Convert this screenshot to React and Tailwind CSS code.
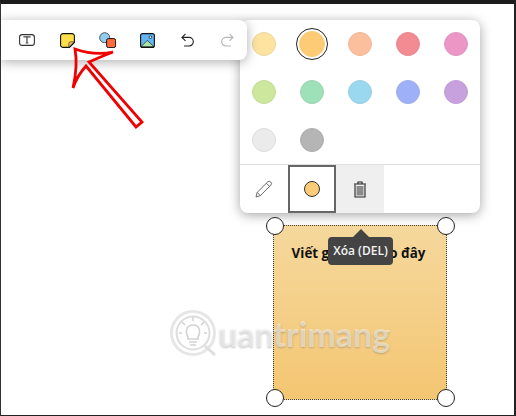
const swatches = [
  'bg-[#fee3a0] border-[#ecd59b]',
  'bg-[#fdcb75] border-[#fdcb75]',
  'bg-[#fbbf9d] border-[#efb899]',
  'bg-[#f38b92] border-[#e78a91]',
  'bg-[#ec96c6] border-[#e096bf]',
  'bg-[#cde79c] border-[#c3da99]',
  'bg-[#9ee0b8] border-[#9dd3b3]',
  'bg-[#99d8ef] border-[#9bcde0]',
  'bg-[#9db0f8] border-[#9eaeea]',
  'bg-[#c7a1de] border-[#bd9fd1]',
  'bg-[#ebebeb] border-[#dcdcdc]',
  'bg-[#b5b5b5] border-[#adadad]',
];

function TextIcon() {
  return (
    <svg width="16" height="12" viewBox="0 0 16 12" fill="none">
      <rect x="0.6" y="0.6" width="14.8" height="10.8" rx="2.5" fill="#fff" stroke="#333" strokeWidth="1.1" />
      <path d="M5 3.4V2.9H11V3.4M8 3V9M6.7 9H9.3" stroke="#444" strokeWidth="1.2" />
    </svg>
  );
}

function NoteIcon() {
  return (
    <svg width="15" height="15" viewBox="0 0 15 15" fill="none">
      <path d="M3 .6H12A2.4 2.4 0 0 1 14.4 3V9.5L9.5 14.4H3A2.4 2.4 0 0 1 .6 12V3A2.4 2.4 0 0 1 3 .6Z" fill="#ffe04a" stroke="#111" strokeWidth="1.1" />
      <path d="M14.2 8.8H10.8A2 2 0 0 0 8.8 10.8V14.2Z" fill="#f9b76c" stroke="#333" strokeWidth="0.7" />
    </svg>
  );
}

function ShapesIcon() {
  return (
    <svg width="17" height="16" viewBox="0 0 17 16" fill="none">
      <circle cx="5.7" cy="5.7" r="5" fill="#8fcdf5" stroke="#444" strokeWidth="0.9" />
      <rect x="7.6" y="6.6" width="9" height="9" rx="1.8" fill="#ff6a3c" stroke="#111" strokeWidth="1" />
    </svg>
  );
}

function ImageIcon() {
  return (
    <svg width="15" height="15" viewBox="0 0 15 15" fill="none">
      <rect x="0.6" y="0.6" width="13.8" height="13.8" rx="2" fill="#63b5f0" />
      <path d="M1 13.8L7.2 7.4L14 13.8Z" fill="#a8e6a1" stroke="#222" strokeWidth="0.7" />
      <circle cx="10.4" cy="4.2" r="1.3" fill="#fff" stroke="#222" strokeWidth="0.8" />
      <rect x="0.6" y="0.6" width="13.8" height="13.8" rx="2" stroke="#111" strokeWidth="1.1" />
    </svg>
  );
}

function UndoIcon({ color, flip }) {
  return (
    <svg width="13" height="14" viewBox="0 0 13 14" fill="none" className={flip ? '-scale-x-100' : ''}>
      <path d="M4.5 .8L1 4.4L4.5 7.8M1 4.4H8A4.2 4.2 0 0 1 8 13H3" stroke={color} strokeWidth="1.1" />
    </svg>
  );
}

function Handle({ className }) {
  return <div className={`absolute w-[18px] h-[18px] rounded-full bg-white border-[1.5px] border-[#222] ${className}`} />;
}

function Watermark() {
  return (
    <div className="absolute left-[167px] top-[304px] flex items-center">
      <svg width="50" height="52" viewBox="0 0 50 52" fill="none">
        <circle cx="25" cy="25" r="21.5" fill="#fff" stroke="#e6e6e6" strokeWidth="3" />
        <circle cx="25" cy="25" r="16.5" stroke="#dddddd" strokeWidth="2" />
        <path d="M37 38L47 47" stroke="#dedede" strokeWidth="3" />
        <path d="M20 29C17 24 18 17 25 17C32 17 33 24 30 29V31H20Z" stroke="#d2d2d2" strokeWidth="1.5" />
        <path d="M21 34H29M22 37H28M25 9V13M14 14L17 17M36 14L33 17M11 25H14M36 25H39" stroke="#d2d2d2" strokeWidth="1.5" />
      </svg>
      <span className="-mt-[1px] font-['Lato',sans-serif] font-bold text-[34px] leading-none text-white/50 [text-shadow:0_1px_2px_rgba(90,90,90,0.35)]">
        uantrimang
      </span>
    </div>
  );
}

export default function App() {
  return (
    <div className="relative w-[516px] h-[416px] overflow-hidden bg-white border-t-4 border-l border-r-2 border-b border-t-[#1c1c1c] border-l-[#333] border-r-[#222] border-b-[#222] font-['Open_Sans',sans-serif]">
      <div className="flex pt-4 items-start">
        {/* left toolbar, sits on top of the colour panel */}
        <div className="relative z-10 w-[246px] h-10 flex items-center bg-white rounded-r-lg shadow-[0_2px_12px_rgba(0,0,0,0.32)]">
          <div className="ml-[18px]"><TextIcon /></div>
          <div className="ml-[25px]"><NoteIcon /></div>
          <div className="ml-[24px]"><ShapesIcon /></div>
          <div className="ml-[24px]"><ImageIcon /></div>
          <div className="ml-[26px]"><UndoIcon color="#222" /></div>
          <div className="ml-[27px]"><UndoIcon color="#b5b5b5" flip /></div>
        </div>

        <div className="-ml-[7px] w-[240px] bg-white rounded-lg shadow-[0_2px_12px_rgba(0,0,0,0.36)] overflow-hidden">
          <div className="grid grid-cols-5 border-b border-[#dedede]">
            {swatches.map((c, i) => (
              <div key={i} className="h-12 flex items-center justify-center">
                <div className={i === 1 ? 'w-8 h-8 rounded-full border-[1.5px] border-[#222] flex items-center justify-center' : ''}>
                  <div className={`rounded-full border ${c} ${i === 1 ? 'w-[26px] h-[26px]' : 'w-6 h-6'}`} />
                </div>
              </div>
            ))}
          </div>
          <div className="flex h-12">
            <div className="w-12 flex items-center justify-center">
              <svg width="18" height="18" viewBox="0 0 18 18" fill="none">
                <path d="M1 17L2.2 12.4L12.6 2A2 2 0 0 1 15.8 5.2L5.4 15.6Z" stroke="#6a6a6a" strokeWidth="1" fill="#fff" />
                <path d="M11.4 3.2L14.6 6.4M2.2 12.4L5.4 15.6" stroke="#6a6a6a" strokeWidth="1" />
              </svg>
            </div>
            <div className="w-12 flex items-center justify-center border-2 border-[#666]">
              <div className="w-4 h-4 rounded-full bg-[#fdcb75] border border-[#333]" />
            </div>
            <div className="w-12 flex items-center justify-center bg-[#efefef]">
              <svg width="14" height="17" viewBox="0 0 14 17" fill="none">
                <path d="M1 3H13M5 3V1H9V3" stroke="#222" strokeWidth="1.1" />
                <path d="M2 3.5V16H12V3.5" stroke="#222" strokeWidth="1.1" />
                <rect x="3.5" y="5" width="7" height="9.5" fill="#8c8c8c" />
              </svg>
            </div>
          </div>
        </div>
      </div>

      {/* sticky note */}
      <div className="relative ml-[272px] mt-3 w-[174px] h-[175px] border border-dotted border-[#444] bg-gradient-to-b from-[#f5d89c] to-[#f4c672] pt-[18px] text-center">
        <p className="pr-[3px] text-[13.4px] font-bold text-[#111] leading-[18px] whitespace-nowrap">Viết ghi chú vào đây</p>
        <Handle className="-left-[8px] -top-[9px]" />
        <Handle className="-right-[9px] -top-[9px]" />
        <Handle className="-left-[8px] -bottom-[8px]" />
        <Handle className="-right-[9px] -bottom-[8px]" />
        <div className="absolute left-[54px] top-[3px] flex flex-col items-center">
          <div className="w-0 h-0 border-x-[8px] border-x-transparent border-b-[8px] border-b-[#444]" />
          <div className="w-[65px] h-7 flex items-center justify-center rounded-sm bg-[#444] text-[#f4f4f4] text-xs font-semibold whitespace-nowrap">
            Xóa (DEL)
          </div>
        </div>
      </div>

      <Watermark />

      {/* red annotation arrow */}
      <svg className="absolute left-0 top-0 z-20" width="160" height="140" viewBox="0 0 160 140" fill="none">
        <path
          d="M74 45Q94 52 112 48Q99 53 88 58L141 118L135 123L85 62Q76 72 72 84Q77 62 74 45Z"
          stroke="#f00000"
          strokeWidth="2.8"
        />
      </svg>
    </div>
  );
}
